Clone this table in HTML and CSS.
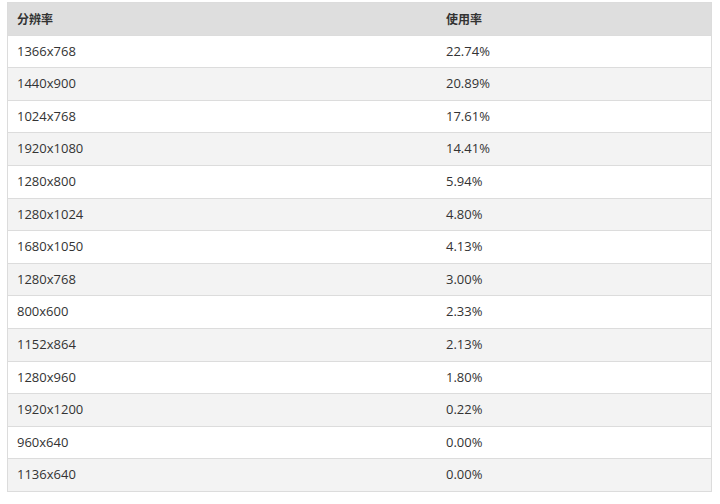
FILE: index.html
```html
<!DOCTYPE html>
<html lang="zh">
<head>
<meta charset="utf-8">
<link rel="stylesheet" href="styles.css">
</head>
<body>
<div class="wrap">
<table class="stats">
<thead>
<tr><th class="c1">分辨率</th><th class="c2">使用率</th></tr>
</thead>
<tbody>
<tr><td>1366x768</td><td>22.74%</td></tr>
<tr><td>1440x900</td><td>20.89%</td></tr>
<tr><td>1024x768</td><td>17.61%</td></tr>
<tr><td>1920x1080</td><td>14.41%</td></tr>
<tr><td>1280x800</td><td>5.94%</td></tr>
<tr><td>1280x1024</td><td>4.80%</td></tr>
<tr><td>1680x1050</td><td>4.13%</td></tr>
<tr><td>1280x768</td><td>3.00%</td></tr>
<tr><td>800x600</td><td>2.33%</td></tr>
<tr><td>1152x864</td><td>2.13%</td></tr>
<tr><td>1280x960</td><td>1.80%</td></tr>
<tr><td>1920x1200</td><td>0.22%</td></tr>
<tr><td>960x640</td><td>0.00%</td></tr>
<tr><td>1136x640</td><td>0.00%</td></tr>
</tbody>
</table>
</div>
</body>
</html>
```
FILE: styles.css
```css
html, body {
  margin: 0;
  padding: 0;
  background: #ffffff;
}
.wrap {
  padding: 2px 8px 0 7px;
}
.stats {
  width: 705px;
  border-collapse: collapse;
  border: 1px solid #dcdcdc;
  font-family: "Open Sans", "Noto Sans CJK SC", sans-serif;
  font-size: 13px;
  color: #333333;
}
.stats th, .stats td {
  text-align: left;
  padding: 8px 10px 8px 9px;
  line-height: 15.6px;
  border-bottom: 1px solid #dcdcdc;
}
.stats th {
  background: #dedede;
  font-weight: bold;
  font-size: 12px;
  font-family: "Noto Sans CJK SC", sans-serif;
}
.c1 { width: 410px; }
.stats tbody tr:nth-child(odd) td { background: #ffffff; }
.stats tbody tr:nth-child(even) td { background: #f3f3f3; }
```
